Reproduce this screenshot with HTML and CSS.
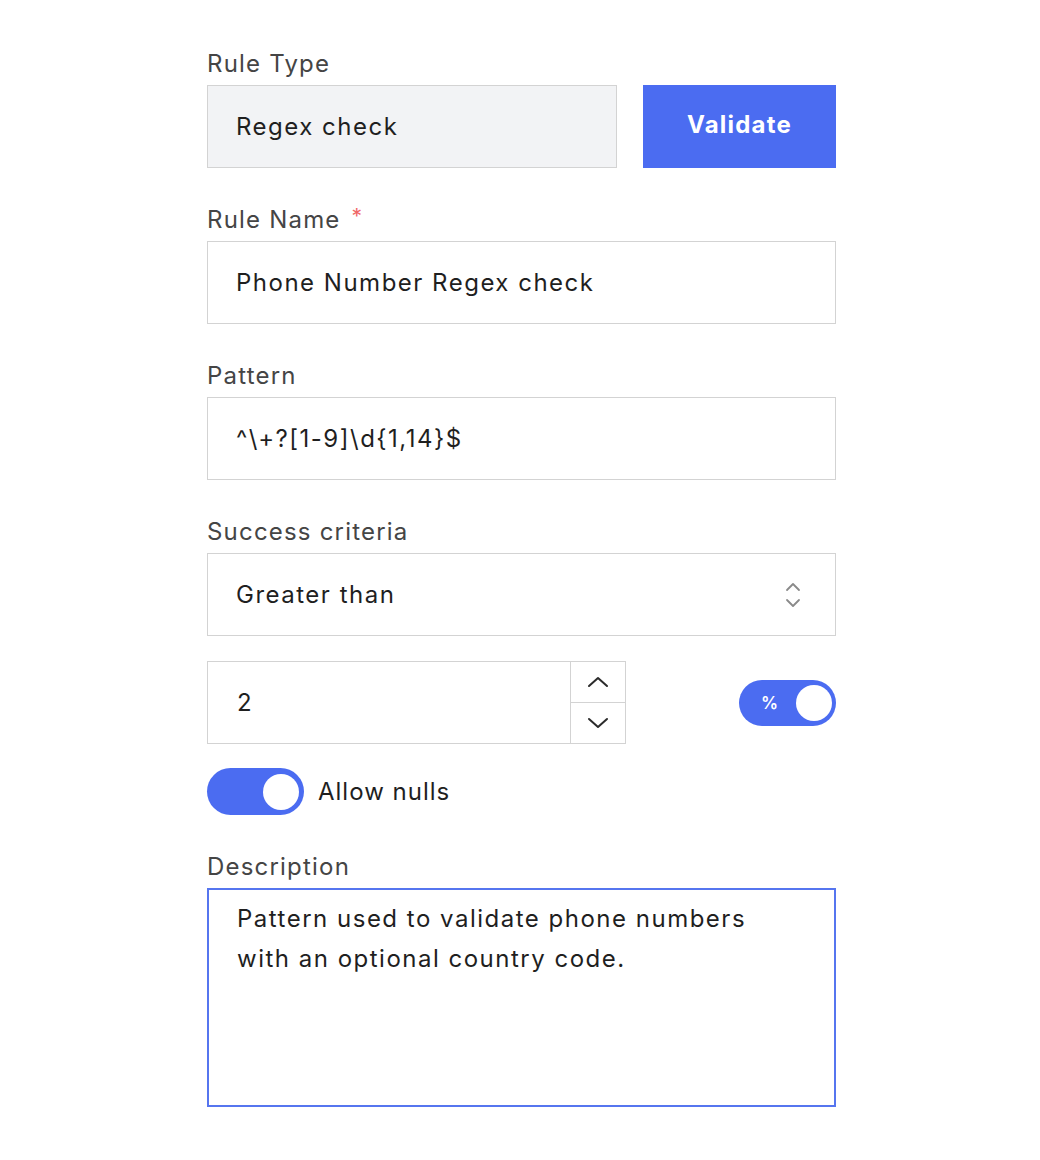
FILE: index.html
```html
<!DOCTYPE html>
<html lang="en">
<head>
<meta charset="utf-8">
<title>Rule editor</title>
<link rel="stylesheet" href="styles.css">
</head>
<body>
<form class="form">
  <div class="field">
    <label class="label">Rule Type</label>
    <div class="type-row">
      <div class="control control-readonly type-control">Regex check</div>
      <button type="button" class="btn-primary">Validate</button>
    </div>
  </div>

  <div class="field">
    <label class="label">Rule Name <span class="req">*</span></label>
    <div class="control">Phone Number Regex check</div>
  </div>

  <div class="field">
    <label class="label">Pattern</label>
    <div class="control">^\+?[1-9]\d{1,14}$</div>
  </div>

  <div class="field field-tight">
    <label class="label">Success criteria</label>
    <div class="control select">
      <span>Greater than</span>
      <svg class="select-arrows" width="16" height="28" viewBox="0 0 16 28" fill="none" stroke="#8a8a8a" stroke-width="1.8" stroke-linecap="round" stroke-linejoin="round">
        <path d="M2 9 L8 3 L14 9"/>
        <path d="M2 19 L8 25 L14 19"/>
      </svg>
    </div>
  </div>

  <div class="number-row">
    <div class="number">
      <div class="number-value">2</div>
      <div class="spin">
        <div class="spin-btn">
          <svg width="22" height="12" viewBox="0 0 22 12" fill="none" stroke="#2b2b2b" stroke-width="2" stroke-linecap="round" stroke-linejoin="round"><path d="M2 10 L11 2 L20 10"/></svg>
        </div>
        <div class="spin-btn spin-btn-down">
          <svg width="22" height="12" viewBox="0 0 22 12" fill="none" stroke="#2b2b2b" stroke-width="2" stroke-linecap="round" stroke-linejoin="round"><path d="M2 2 L11 10 L20 2"/></svg>
        </div>
      </div>
    </div>
    <div class="toggle toggle-pct">
      <span class="toggle-label">%</span>
      <span class="knob"></span>
    </div>
  </div>

  <div class="nulls-row">
    <div class="toggle toggle-nulls">
      <span class="knob"></span>
    </div>
    <span class="nulls-text">Allow nulls</span>
  </div>

  <div class="field">
    <label class="label">Description</label>
    <div class="control textarea">Pattern used to validate phone numbers with an optional country code.</div>
  </div>
</form>
</body>
</html>
```

FILE: styles.css
```css
* {
  box-sizing: border-box;
}

body {
  margin: 0;
  background: #ffffff;
  font-family: Inter, "Open Sans", "Liberation Sans", sans-serif;
  color: #222222;
}

.form {
  width: 629px;
  margin-left: 207px;
  padding-top: 49px;
}

.field {
  margin-bottom: 37px;
}

.field-tight {
  margin-bottom: 25px;
}

.label {
  display: block;
  height: 30px;
  line-height: 30px;
  margin-bottom: 6px;
  font-size: 24px;
  color: #454545;
  letter-spacing: 1.2px;
}

.req {
  display: inline-block;
  margin-left: 3px;
  color: #f06767;
  font-size: 21px;
  vertical-align: top;
  line-height: 24px;
}

.control {
  height: 83px;
  border: 1.5px solid #d3d3d3;
  background: #ffffff;
  padding: 0 28px;
  display: flex;
  align-items: center;
  font-size: 24px;
  color: #1f1f1f;
  letter-spacing: 1.5px;
}

.control-readonly {
  background: #f2f3f5;
}

.type-row {
  display: flex;
  gap: 26px;
}

.type-control {
  width: 410px;
}

.btn-primary {
  width: 193px;
  height: 83px;
  border: none;
  background: #4b6cf1;
  color: #ffffff;
  font-family: inherit;
  font-size: 24px;
  font-weight: 700;
  letter-spacing: 1.2px;
  padding: 0 0 4px;
}

.select {
  justify-content: space-between;
  padding-right: 34px;
}

.select-arrows {
  display: block;
}

.number-row {
  display: flex;
  align-items: center;
  justify-content: space-between;
  margin-bottom: 24px;
}

.number {
  width: 419px;
  height: 83px;
  border: 1.5px solid #d3d3d3;
  display: flex;
}

.number-value {
  flex: 1;
  display: flex;
  align-items: center;
  padding-left: 29px;
  font-size: 24px;
  color: #1f1f1f;
}

.spin {
  width: 55px;
  border-left: 1.5px solid #d3d3d3;
  display: flex;
  flex-direction: column;
}

.spin-btn {
  flex: 1;
  display: flex;
  align-items: center;
  justify-content: center;
}

.spin-btn-down {
  border-top: 1.5px solid #d3d3d3;
}

.toggle {
  display: flex;
  align-items: center;
  background: #4b6cf1;
}

.toggle-pct {
  width: 97px;
  height: 46px;
  border-radius: 23px;
  padding: 0 4px 0 22px;
  justify-content: space-between;
}

.toggle-label {
  color: #ffffff;
  font-size: 17px;
  font-weight: 600;
}

.knob {
  width: 36px;
  height: 36px;
  border-radius: 50%;
  background: #ffffff;
}

.nulls-row {
  display: flex;
  align-items: center;
  gap: 14px;
  margin-bottom: 37px;
}

.toggle-nulls {
  width: 97px;
  height: 47px;
  border-radius: 24px;
  padding-right: 5px;
  justify-content: flex-end;
}

.nulls-text {
  font-size: 24px;
  color: #1f1f1f;
  letter-spacing: 1px;
}

.textarea {
  height: 219px;
  border: 2px solid #5675ef;
  align-items: flex-start;
  padding-top: 9px;
  line-height: 40px;
  padding-right: 50px;
}
```
